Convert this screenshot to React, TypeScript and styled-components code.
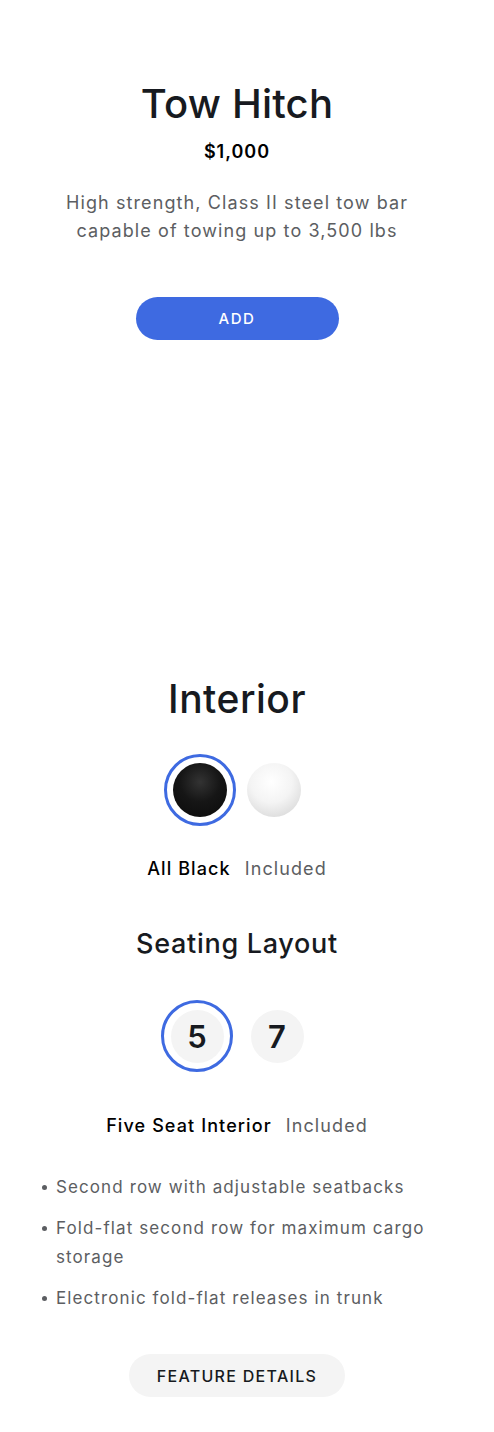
import React from "react";
import styled, { createGlobalStyle } from "styled-components";

const GlobalStyle = createGlobalStyle`
  body {
    margin: 0;
    background: #ffffff;
    font-family: "Inter", "Open Sans", sans-serif;
    color: #171a20;
    -webkit-font-smoothing: antialiased;
  }
`;

const Page = styled.div`
  width: 474px;
  min-height: 1432px;
  display: flex;
  flex-direction: column;
  align-items: center;
`;

const Section = styled.section<{ top: number }>`
  width: 100%;
  display: flex;
  flex-direction: column;
  align-items: center;
  padding-top: ${(p) => p.top}px;
  box-sizing: border-box;
`;

const Title = styled.h1<{ size: number; line: number; spacing?: number }>`
  margin: 0;
  font-size: ${(p) => p.size}px;
  line-height: ${(p) => p.line}px;
  font-weight: 500;
  color: #171a20;
  letter-spacing: ${(p) => p.spacing ?? 0.2}px;
`;

const Price = styled.div`
  margin-top: 12px;
  font-size: 18px;
  line-height: 24px;
  font-weight: 600;
  color: #000;
  letter-spacing: 1px;
`;

const Description = styled.p`
  margin: 25px 0 0;
  width: 390px;
  text-align: center;
  font-size: 18px;
  line-height: 28px;
  color: #5c5e62;
  letter-spacing: 1.1px;
`;

const ButtonWrap = styled.div<{ top: number }>`
  margin-top: ${(p) => p.top}px;
`;

const PillButton = styled.button<{ primary?: boolean; width: number }>`
  width: ${(p) => p.width}px;
  height: 43px;
  border: none;
  border-radius: 22px;
  background: ${(p) => (p.primary ? "#3e6ae1" : "#f4f4f4")};
  color: ${(p) => (p.primary ? "#ffffff" : "#171a20")};
  font-family: inherit;
  font-size: ${(p) => (p.primary ? 15 : 16)}px;
  font-weight: 500;
  letter-spacing: ${(p) => (p.primary ? 1.6 : 1.3)}px;
  text-transform: uppercase;
  cursor: pointer;
`;

const OptionRow = styled.div<{ top: number; gap: number }>`
  display: flex;
  align-items: center;
  gap: ${(p) => p.gap}px;
  margin-top: ${(p) => p.top}px;
`;

const Ring = styled.div<{ selected?: boolean }>`
  width: 72px;
  height: 72px;
  box-sizing: border-box;
  border-radius: 50%;
  border: 3px solid ${(p) => (p.selected ? "#3e6ae1" : "transparent")};
  display: flex;
  align-items: center;
  justify-content: center;
`;

const Swatch = styled.div<{ tone: "black" | "white" }>`
  width: 54px;
  height: 54px;
  border-radius: 50%;
  background: ${(p) =>
    p.tone === "black"
      ? "radial-gradient(circle at 50% 35%, #333333 0%, #161616 45%, #0a0a0a 100%)"
      : "radial-gradient(circle at 45% 35%, #ffffff 0%, #f4f4f4 45%, #cfcfcf 100%)"};
`;

const SeatBubble = styled.div`
  width: 53px;
  height: 53px;
  border-radius: 50%;
  background: #f4f4f4;
  display: flex;
  align-items: center;
  justify-content: center;
  font-size: 31px;
  font-weight: 600;
  color: #171a20;
`;

const Caption = styled.div<{ top: number }>`
  margin-top: ${(p) => p.top}px;
  display: flex;
  gap: 14px;
  font-size: 18px;
  line-height: 24px;
  letter-spacing: 1.1px;
`;

const CaptionName = styled.span`
  font-weight: 500;
  color: #000;
`;

const CaptionNote = styled.span`
  color: #5c5e62;
`;

const FeatureList = styled.ul`
  align-self: stretch;
  list-style: none;
  margin: 35px 0 0;
  padding: 0 20px 0 56px;
  display: flex;
  flex-direction: column;
  gap: 12px;
`;

const FeatureItem = styled.li`
  position: relative;
  font-size: 17px;
  line-height: 29px;
  color: #5c5e62;
  letter-spacing: 1.1px;
  &::before {
    content: "";
    position: absolute;
    left: -14px;
    top: 12px;
    width: 5px;
    height: 5px;
    border-radius: 50%;
    background: #5c5e62;
  }
`;

export default function App() {
  return (
    <Page>
      <GlobalStyle />
      <Section top={80}>
        <Title size={40} line={48}>
          Tow Hitch
        </Title>
        <Price>$1,000</Price>
        <Description>
          High strength, Class II steel tow bar capable of towing up to 3,500
          lbs
        </Description>
        <ButtonWrap top={52}>
          <PillButton primary width={203}>
            Add
          </PillButton>
        </ButtonWrap>
      </Section>

      <Section top={336}>
        <Title size={39} line={46} spacing={0.5}>
          Interior
        </Title>
        <OptionRow top={32} gap={2}>
          <Ring selected>
            <Swatch tone="black" />
          </Ring>
          <Ring>
            <Swatch tone="white" />
          </Ring>
        </OptionRow>
        <Caption top={31}>
          <CaptionName>All Black</CaptionName>
          <CaptionNote>Included</CaptionNote>
        </Caption>

        <ButtonWrap top={47}>
          <Title size={27} line={32} spacing={0.7}>
            Seating Layout
          </Title>
        </ButtonWrap>
        <OptionRow top={40} gap={8}>
          <Ring selected>
            <SeatBubble>5</SeatBubble>
          </Ring>
          <Ring>
            <SeatBubble>7</SeatBubble>
          </Ring>
        </OptionRow>
        <Caption top={42}>
          <CaptionName>Five Seat Interior</CaptionName>
          <CaptionNote>Included</CaptionNote>
        </Caption>

        <FeatureList>
          <FeatureItem>Second row with adjustable seatbacks</FeatureItem>
          <FeatureItem>Fold-flat second row for maximum cargo storage</FeatureItem>
          <FeatureItem>Electronic fold-flat releases in trunk</FeatureItem>
        </FeatureList>

        <ButtonWrap top={41}>
          <PillButton width={216}>Feature Details</PillButton>
        </ButtonWrap>
      </Section>
    </Page>
  );
}
